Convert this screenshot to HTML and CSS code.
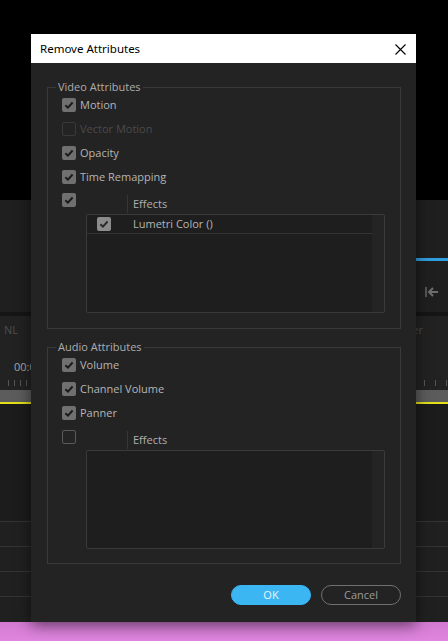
FILE: index.html
```html
<!DOCTYPE html>
<html>
<head>
<meta charset="utf-8">
<link rel="stylesheet" href="styles.css">
</head>
<body>
<div class="screen">
  <div class="bg">
    <div class="bg-top"></div>
    <div class="bg-upper">
      <div class="bg-blue"></div>
      <div class="bg-icon">
        <svg width="16" height="12" viewBox="0 0 16 12"><path d="M2 1v10" stroke="#6e6e6e" stroke-width="1.4"/><path d="M5 6h9" stroke="#6e6e6e" stroke-width="2"/><path d="M9 2L5 6l4 4" fill="none" stroke="#6e6e6e" stroke-width="2"/></svg>
      </div>
    </div>
    <div class="bg-divider"></div>
    <div class="bg-ruler">
      <div class="ruler-labels"><span class="nl">NL</span><span class="er">er</span></div>
      <div class="timecode">00:0</div>
      <div class="ticks">
        <div class="tick-group left"><i></i><i></i><i></i><i></i></div>
        <div class="tick-group right"><i></i><i></i><i></i></div>
      </div>
    </div>
    <div class="playbar"></div>
    <div class="yellow"></div>
    <div class="bg-tracks">
      <div class="track-head"></div>
      <div class="track"></div>
      <div class="track"></div>
      <div class="track"></div>
      <div class="track"></div>
    </div>
    <div class="bg-pink"></div>
  </div>

  <div class="dialog">
    <div class="titlebar">
      <span class="title">Remove Attributes</span>
      <svg class="close" width="11" height="11" viewBox="0 0 11 11"><path d="M0.5 0.5L10.5 10.5M10.5 0.5L0.5 10.5" stroke="#000" stroke-width="1.1"/></svg>
    </div>
    <div class="body">
      <div class="group video">
        <span class="legend">Video Attributes</span>
        <div class="row"><span class="cb on"><svg viewBox="0 0 14 14"><path d="M3.4 7.3L5.9 9.7L10.6 4.5" /></svg></span><span class="lbl">Motion</span></div>
        <div class="row"><span class="cb disabled"></span><span class="lbl dim">Vector Motion</span></div>
        <div class="row"><span class="cb on"><svg viewBox="0 0 14 14"><path d="M3.4 7.3L5.9 9.7L10.6 4.5" /></svg></span><span class="lbl">Opacity</span></div>
        <div class="row"><span class="cb on"><svg viewBox="0 0 14 14"><path d="M3.4 7.3L5.9 9.7L10.6 4.5" /></svg></span><span class="lbl">Time Remapping</span></div>
        <div class="effects">
          <span class="cb on"><svg viewBox="0 0 14 14"><path d="M3.4 7.3L5.9 9.7L10.6 4.5" /></svg></span>
          <div class="fx-col">
            <div class="fx-head"><span class="fx-head-cell"></span><span class="fx-head-text">Effects</span></div>
            <div class="fx-list">
              <div class="fx-main">
                <div class="fx-row">
                  <span class="fx-cell"><span class="cb on light"><svg viewBox="0 0 14 14"><path d="M3.4 7.3L5.9 9.7L10.6 4.5" /></svg></span></span>
                  <span class="fx-name">Lumetri Color ()</span>
                </div>
              </div>
              <div class="fx-scroll"></div>
            </div>
          </div>
        </div>
      </div>

      <div class="group audio">
        <span class="legend">Audio Attributes</span>
        <div class="row"><span class="cb on"><svg viewBox="0 0 14 14"><path d="M3.4 7.3L5.9 9.7L10.6 4.5" /></svg></span><span class="lbl">Volume</span></div>
        <div class="row"><span class="cb on"><svg viewBox="0 0 14 14"><path d="M3.4 7.3L5.9 9.7L10.6 4.5" /></svg></span><span class="lbl">Channel Volume</span></div>
        <div class="row"><span class="cb on"><svg viewBox="0 0 14 14"><path d="M3.4 7.3L5.9 9.7L10.6 4.5" /></svg></span><span class="lbl">Panner</span></div>
        <div class="effects">
          <span class="cb off"></span>
          <div class="fx-col">
            <div class="fx-head"><span class="fx-head-cell"></span><span class="fx-head-text">Effects</span></div>
            <div class="fx-list">
              <div class="fx-main"></div>
              <div class="fx-scroll"></div>
            </div>
          </div>
        </div>
      </div>

      <div class="buttons">
        <button class="btn ok">OK</button>
        <button class="btn cancel">Cancel</button>
      </div>
    </div>
  </div>
</div>
</body>
</html>
```

FILE: styles.css
```css
* { box-sizing: border-box; }
html, body { margin: 0; padding: 0; background: #000; }
.screen {
  position: relative;
  width: 448px;
  height: 641px;
  overflow: hidden;
  font-family: "Open Sans", "Noto Sans", sans-serif;
}
.bg { display: flex; flex-direction: column; width: 448px; height: 641px; }
.bg-top { height: 200px; background: #000; }
.bg-upper {
  height: 112px;
  background: #1f1f1f;
  display: flex;
  flex-direction: column;
  align-items: flex-end;
}
.bg-blue { margin-top: 58px; width: 60px; height: 3px; background: #2f9fe0; }
.bg-icon { margin-top: 25px; width: 24px; height: 12px; display: flex; }
.bg-divider { height: 4px; background: #151515; }
.bg-ruler { height: 74px; background: #222; display: flex; flex-direction: column; }
.ruler-labels {
  margin-top: 7px;
  height: 14px;
  display: flex;
  justify-content: space-between;
  font-size: 11px;
  line-height: 14px;
  color: #4e4e4e;
  padding: 0 25px 0 4px;
}
.timecode {
  margin-top: 23px;
  height: 14px;
  line-height: 14px;
  font-size: 11px;
  color: #a8a8a8;
  padding-left: 14px;
}
.ticks { margin-top: 6px; height: 6px; display: flex; justify-content: space-between; }
.tick-group { display: flex; height: 6px; }
.tick-group i { display: block; width: 1px; height: 6px; background: #555; }
.tick-group.left { padding-left: 8px; gap: 5px; }
.tick-group.right { padding-right: 1px; gap: 10px; }
.playbar { height: 12px; background: #5c5c5c; }
.yellow { height: 2px; background: #e4e01a; }
.bg-tracks { height: 218px; background: #1e1e1e; display: flex; flex-direction: column; }
.track-head { height: 117px; background: #1c1c1c; }
.track { height: 25px; border-top: 1px solid #343434; background: #202020; }
.bg-pink { height: 19px; background: linear-gradient(180deg, #d27ad2, #e086df); }

.dialog {
  position: absolute;
  left: 31px;
  top: 34px;
  width: 385px;
  height: 588px;
  background: #232323;
  box-shadow: 0 3px 14px rgba(0, 0, 0, 0.55);
  display: flex;
  flex-direction: column;
}
.titlebar {
  height: 29px;
  background: #fff;
  display: flex;
  align-items: center;
  justify-content: space-between;
  padding: 0 10px 0 9px;
}
.title {
  font-family: "Noto Sans", "Open Sans", sans-serif;
  font-size: 11.5px;
  color: #000;
  line-height: 16px;
}
.close { display: block; margin-top: 1px; }
.body {
  flex: 1;
  display: flex;
  flex-direction: column;
  padding: 24px 15px 0 16px;
}
.group {
  position: relative;
  border: 1px solid #393939;
  padding-left: 14px;
}
.group.video { height: 242px; padding-top: 5px; }
.group.audio { height: 217px; margin-top: 18px; padding-top: 5px; }
.legend {
  position: absolute;
  top: -9px;
  left: 8px;
  padding: 0 2px;
  background: #232323;
  font-size: 11px;
  line-height: 16px;
  color: #adadad;
}
.row { height: 24px; display: flex; align-items: center; }
.lbl { margin-left: 4px; font-size: 11px; color: #b5b5b5; line-height: 14px; }
.lbl.dim { color: #4a4a4a; }
.cb {
  width: 14px;
  height: 14px;
  flex: 0 0 14px;
  border-radius: 2px;
  display: block;
}
.cb svg { display: block; width: 14px; height: 14px; }
.cb svg path { fill: none; stroke: #1a1a1a; stroke-width: 1.9; }
.cb.on { background: #707070; }
.cb.on.light { background: #8c8c8c; }
.cb.on.light svg path { stroke: #2a2a2a; }
.cb.disabled { border: 1px solid #393939; }
.cb.off { border: 1px solid #5a5a5a; background: #242424; }

.effects { display: flex; margin-top: 4px; }
.audio .effects { margin-top: 5px; }
.effects > .cb { margin-right: 10px; }
.fx-col { width: 299px; display: flex; flex-direction: column; }
.fx-head { height: 21px; display: flex; align-items: flex-end; }
.audio .fx-head { height: 20px; }
.fx-head-cell { width: 42px; height: 18px; border-right: 1px solid #363636; align-self: flex-end; margin-bottom: 1px; }
.fx-head-text { padding-left: 5px; font-size: 11px; line-height: 18px; color: #b0b0b0; margin-bottom: 1px; }
.fx-list {
  height: 99px;
  border: 1px solid #3a3a3a;
  border-radius: 2px;
  background: #1e1e1e;
  display: flex;
}
.fx-main { flex: 1; }
.fx-scroll { width: 12px; background: #242424; }
.fx-row {
  height: 19px;
  border-bottom: 1px solid #343434;
  display: flex;
  align-items: center;
}
.fx-cell { width: 40px; padding-left: 10px; }
.fx-name { padding-left: 6px; font-size: 11px; color: #b5b5b5; line-height: 14px; }

.buttons {
  margin-top: 21px;
  display: flex;
  justify-content: flex-end;
  gap: 10px;
}
.btn {
  width: 80px;
  height: 20px;
  border-radius: 10px;
  font-family: "Open Sans", "Noto Sans", sans-serif;
  font-size: 11px;
  line-height: 16px;
  padding: 0;
  cursor: default;
}
.btn.ok { background: #3cb5f3; border: 1px solid #3cb5f3; color: #eaf6fd; }
.btn.cancel { background: transparent; border: 1px solid #707070; color: #9c9c9c; }
```
